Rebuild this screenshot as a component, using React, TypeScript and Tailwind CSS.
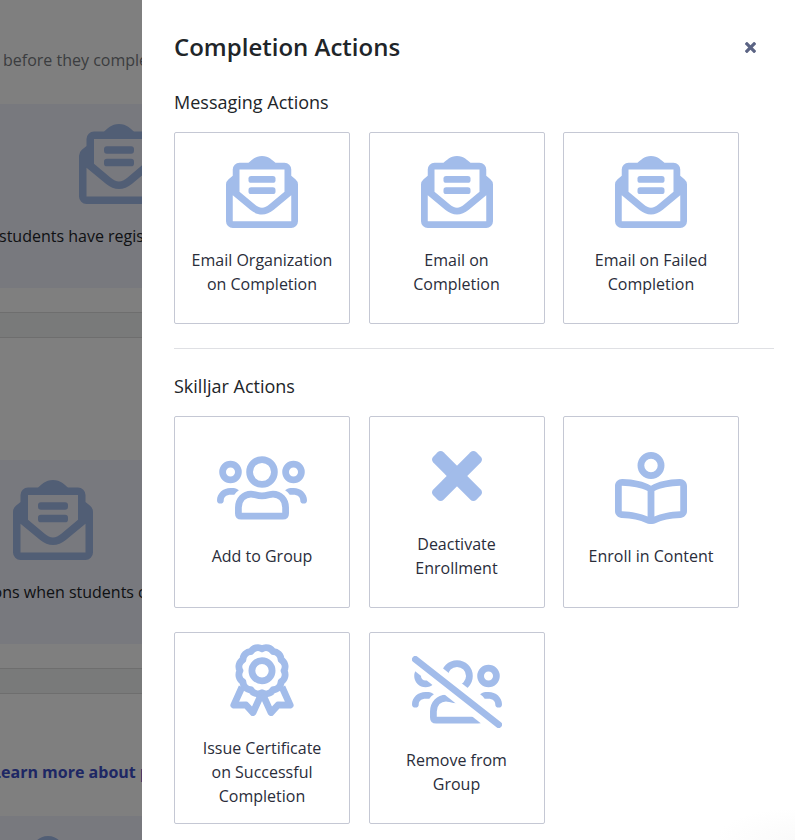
import type { ComponentType } from "react";

type IconProps = { className?: string };

function MailIcon({ className = "h-18 w-18" }: IconProps) {
  return (
    <svg viewBox="0 0 72 72" className={className} fill="currentColor" aria-hidden="true">
      <path
        fillRule="evenodd"
        d="M36 0C29 0 25.500 4.500 22.500 6.750H13.500A6.750 6.750 0 0 0 6.750 13.500V19.800L2.600 23.200A7 7 0 0 0 0 28.600V65.250A6.750 6.750 0 0 0 6.750 72H65.250A6.750 6.750 0 0 0 72 65.250V28.600A7 7 0 0 0 69.400 23.200L65.250 19.800V13.500A6.750 6.750 0 0 0 58.500 6.750H49.500C46.500 4.500 43 0 36 0ZM13.500 13.500H58.500V35.700L43.500 48.300C41 50.300 38.500 51.700 36 51.700S31 50.300 28.500 48.300L13.500 35.700ZM6.750 39.300L24.200 53.800C28 57 32 58.500 36 58.500S44 57 47.800 53.800L65.250 39.300V65.250H6.750Z"
      />
      <rect x="22.5" y="20" width="27" height="6.75" rx="2.6" />
      <rect x="22.5" y="31.3" width="27" height="6.75" rx="2.6" />
    </svg>
  );
}

function PeopleShapes() {
  const arm =
    "M13.500 36H16.500C18.500 36 20.500 37 21.900 38.300C20 39.500 18.500 41 17.300 42.800H13.500C9.800 42.800 6.750 45 6.750 48.200A3.375 3.375 0 0 1 0 48.200C0 41.500 6 36 13.500 36Z";
  return (
    <>
      <g fill="none" stroke="currentColor" strokeWidth="6.75">
        <circle cx="13.5" cy="20" r="7.9" />
        <circle cx="76.5" cy="20" r="7.9" />
        <circle cx="45" cy="20" r="12.4" />
        <path d="M21.400 55.500C21.400 47.500 27 42 34 42C37 42 40 43.800 45 43.800S53 42 56 42C63 42 68.600 47.500 68.600 55.500V61.500Q68.600 64.200 65.900 64.200H24.100Q21.400 64.200 21.400 61.500Z" />
      </g>
      <path fill="currentColor" d={arm} />
      <path fill="currentColor" d={arm} transform="translate(90 0) scale(-1 1)" />
    </>
  );
}

function UsersIcon() {
  return (
    <svg viewBox="0 0 90 72" className="h-18 w-[90px]" aria-hidden="true">
      <PeopleShapes />
    </svg>
  );
}

function UsersSlashIcon() {
  return (
    <svg viewBox="0 0 90 72" className="h-18 w-[90px]" aria-hidden="true">
      <mask id="slash-gap" maskUnits="userSpaceOnUse" x="0" y="0" width="90" height="72">
        <rect width="90" height="72" fill="white" />
        <path d="M-20 -15.600L110 87.500" stroke="black" strokeWidth="19.5" />
      </mask>
      <g mask="url(#slash-gap)">
        <PeopleShapes />
      </g>
      <path d="M3.400 3.400L86.600 68.600" stroke="currentColor" strokeWidth="6.75" strokeLinecap="round" />
    </svg>
  );
}

function CrossIcon({ className = "h-18 w-[50px]" }: IconProps) {
  return (
    <svg viewBox="0 0 50 50" className={className} fill="currentColor" aria-hidden="true">
      <rect x="-5.5" y="17.7" width="61" height="14.6" rx="4.2" transform="rotate(45 25 25)" />
      <rect x="-5.5" y="17.7" width="61" height="14.6" rx="4.2" transform="rotate(-45 25 25)" />
    </svg>
  );
}

function ReaderIcon() {
  return (
    <svg viewBox="0 0 72 72" className="h-18 w-18" fill="currentColor" aria-hidden="true">
      <circle cx="36" cy="13.5" r="10.1" fill="none" stroke="currentColor" strokeWidth="6.75" />
      <path
        fillRule="evenodd"
        d="M36 33.800C29 29.500 19 27.300 7.500 27C3.300 26.800 0 29.800 0 34V59C0 62.800 3 65.800 6.700 66C17 66.600 25 68 31 71C34.500 72.400 37.500 72.400 41 71C47 68 55 66.600 65.300 66C69 65.800 72 62.800 72 59V34C72 29.800 68.700 26.800 64.500 27C53 27.300 43 29.500 36 33.800ZM6.750 33.800C17 34.200 26 35.800 32.600 39V64.500C26 61.500 17 59.700 6.750 59.200ZM65.250 33.800C55 34.200 46 35.800 39.400 39V64.500C46 61.500 55 59.700 65.250 59.200Z"
      />
    </svg>
  );
}

function AwardIcon() {
  return (
    <svg
      viewBox="0 0 72 72"
      className="h-18 w-18"
      fill="none"
      stroke="currentColor"
      strokeWidth="6.8"
      strokeLinejoin="round"
      aria-hidden="true"
    >
      <circle cx="36" cy="26.7" r="10.1" />
      <path d="M36 4.700A8 8 0 0 1 47 7.650A8 8 0 0 1 55.050 15.700A8 8 0 0 1 58 26.700A8 8 0 0 1 55.050 37.700A8 8 0 0 1 47 45.750A8 8 0 0 1 36 48.700A8 8 0 0 1 25 45.750A8 8 0 0 1 16.950 37.700A8 8 0 0 1 14 26.700A8 8 0 0 1 16.950 15.700A8 8 0 0 1 25 7.650A8 8 0 0 1 36 4.700Z" />
      <path d="M16 43L7.800 61.200L20 61L27 68.600L35 51" />
      <path d="M56 43L64.200 61.200L52 61L45 68.600L37 51" />
    </svg>
  );
}

type Action = { label: string; icon: ComponentType };

const messagingActions: Action[] = [
  { label: "Email Organization on Completion", icon: MailIcon },
  { label: "Email on Completion", icon: MailIcon },
  { label: "Email on Failed Completion", icon: MailIcon },
];

const skilljarActions: Action[] = [
  { label: "Add to Group", icon: UsersIcon },
  { label: "Deactivate Enrollment", icon: CrossIcon },
  { label: "Enroll in Content", icon: ReaderIcon },
  { label: "Issue Certificate on Successful Completion", icon: AwardIcon },
  { label: "Remove from Group", icon: UsersSlashIcon },
];

function ActionGroup({ title, actions }: { title: string; actions: Action[] }) {
  return (
    <section>
      <h3 className="text-lg leading-6">{title}</h3>
      <div className="mt-[18px] grid max-w-[565px] grid-cols-[repeat(3,176px)] justify-between gap-y-6">
        {actions.map(({ label, icon: Icon }) => (
          <button
            key={label}
            type="button"
            className="flex h-48 flex-col items-center justify-center gap-5 rounded-xs border border-[#c5c8d4] bg-white px-4 pb-1 text-base leading-6 text-[#2a2d3a]"
          >
            <span className="text-[#a2bcea]">
              <Icon />
            </span>
            <span>{label}</span>
          </button>
        ))}
      </div>
    </section>
  );
}

type PagePanelProps = { iconClass: string; textClass?: string; text?: string };

function PagePanel({ iconClass, textClass, text }: PagePanelProps) {
  return (
    <div className="h-46 bg-[#f1f2fd] pt-5">
      <div className={iconClass}>
        <MailIcon className="h-20 w-20 text-[#a2bcea]" />
      </div>
      {text && (
        <div className={textClass}>
          <p className="mt-5 leading-6">{text}</p>
        </div>
      )}
    </div>
  );
}

function Divider() {
  return <div className="h-[26px] shrink-0 border-y border-[#dcdcdc] bg-[#f3f4f5]" />;
}

export default function App() {
  return (
    <div className="relative flex h-screen overflow-hidden bg-white font-['Open_Sans','Noto_Sans',sans-serif] text-base text-[#212529]">
      <main className="relative w-[142px] shrink-0 overflow-hidden whitespace-nowrap">
        <section className="h-[312px] pt-12">
          <p className="ml-[3px] leading-6 text-[#777a80]">before they complete</p>
          <div className="mt-8">
            <PagePanel iconClass="ml-[79px]" textClass="-ml-px" text="students have registered" />
          </div>
        </section>
        <Divider />
        <section className="h-[330px] pt-[122px]">
          <PagePanel iconClass="ml-[13px]" textClass="ml-[-35px]" text="Actions when students complete" />
        </section>
        <Divider />
        <section className="pt-[66px]">
          <a href="#learn" className="ml-[-8px] block leading-6 font-bold text-[#3c4fc8]">
            Learn more about pages
          </a>
          <div className="mt-8">
            <PagePanel iconClass="ml-2" />
          </div>
        </section>
        <div className="absolute inset-0 bg-black/50" />
      </main>

      <aside
        role="dialog"
        aria-labelledby="drawer-title"
        className="min-w-0 flex-1 bg-white pt-[31px] pr-[21px] pl-8"
      >
        <header className="flex items-center justify-between">
          <h2 id="drawer-title" className="text-2xl leading-8 font-semibold">
            Completion Actions
          </h2>
          <button type="button" aria-label="Close" className="mr-2 flex h-8 w-8 items-center justify-center text-[#5b6484]">
            <CrossIcon className="h-[11px] w-[11px]" />
          </button>
        </header>
        <div className="mt-[27px]">
          <ActionGroup title="Messaging Actions" actions={messagingActions} />
        </div>
        <hr className="mt-6 mb-[25px] border-[#dfe0e4]" />
        <ActionGroup title="Skilljar Actions" actions={skilljarActions} />
      </aside>
      <div className="pointer-events-none absolute right-0 bottom-0 h-8 w-20 bg-[radial-gradient(ellipse_at_bottom_right,#fafafa,transparent_70%)]" />
    </div>
  );
}
